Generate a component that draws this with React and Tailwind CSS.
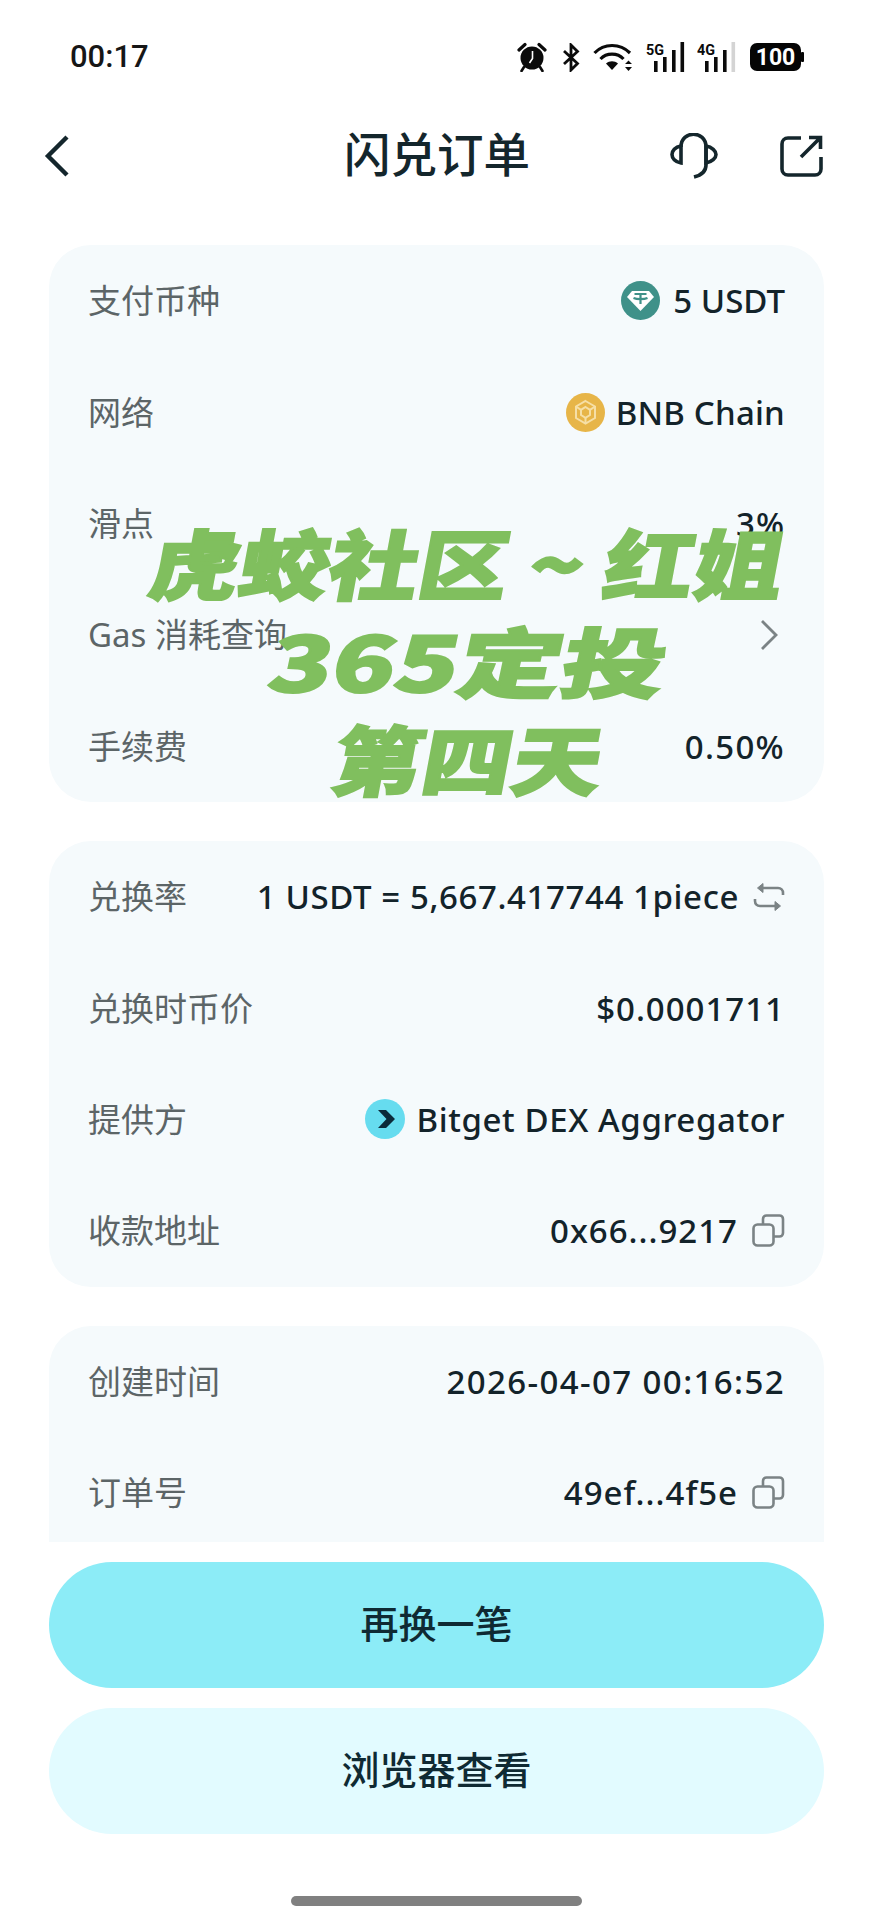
import React from "react";

const sans = "font-['Noto_Sans','Noto_Sans_CJK_SC',sans-serif]";

function Alarm() {
  return (
    <svg width="30" height="30" viewBox="0 0 30 30">
      <circle cx="15" cy="16" r="11.5" fill="#0b0b0b" />
      <path d="M2 8 L8 2.5 M28 8 L22 2.5" stroke="#0b0b0b" strokeWidth="3.2" strokeLinecap="round" />
      <path d="M7 25 L4.5 29 M23 25 L25.5 29" stroke="#0b0b0b" strokeWidth="2.6" strokeLinecap="round" />
      <path d="M15.5 9 V16.5 L12.5 21" stroke="#fff" strokeWidth="1.6" fill="none" />
    </svg>
  );
}

function Bluetooth() {
  return (
    <svg width="18" height="29" viewBox="0 0 18 29">
      <path d="M2 8 L15.5 20.5 L9 27 V2 L15.5 8.5 L2 21" fill="none" stroke="#0b0b0b" strokeWidth="2.8" />
    </svg>
  );
}

function Wifi() {
  return (
    <svg width="40" height="29" viewBox="0 0 40 29">
      <g fill="none" stroke="#0b0b0b" strokeWidth="3.2">
        <path d="M1.5 10 C11 0 27 0 37 10" />
        <path d="M7.5 16 C13.5 9.5 24.5 9.5 30.5 16" />
      </g>
      <path d="M13 20.5 C16.5 17.5 21.5 17.5 25 20.5 L19 27 Z" fill="#0b0b0b" />
      <path d="M32 21 L35.5 17.5 L39 21 Z M32 24 L39 24 L35.5 28 Z" fill="#0b0b0b" />
    </svg>
  );
}

function Signal({ label, dim }) {
  return (
    <svg width="39" height="30" viewBox="0 0 39 30">
      <text x="0" y="13" fontFamily="Roboto, sans-serif" fontWeight="700" fontSize="14.5" fill="#0b0b0b" textLength="18" lengthAdjust="spacingAndGlyphs">{label}</text>
      <rect x="8" y="19" width="3.6" height="11" fill="#0b0b0b" />
      <rect x="17" y="15" width="3.6" height="15" fill="#0b0b0b" />
      <rect x="26" y="8" width="3.6" height="22" fill="#0b0b0b" />
      <rect x="34.5" y="0" width="3.6" height="30" fill={dim ? "#d4d4d4" : "#0b0b0b"} />
    </svg>
  );
}

function Battery() {
  return (
    <svg width="54" height="28" viewBox="0 0 54 28">
      <rect x="0" y="0" width="51" height="28" rx="7" fill="#050505" />
      <rect x="51" y="9" width="3" height="10" rx="1" fill="#050505" />
      <text x="25.5" y="22" textAnchor="middle" fontFamily="Roboto, sans-serif" fontWeight="700" fontSize="23" fill="#fff">100</text>
    </svg>
  );
}

function Usdt() {
  return (
    <svg width="39" height="39" viewBox="0 0 39 39">
      <circle cx="19.5" cy="19.5" r="19.5" fill="#3f9189" />
      <path d="M11 10 H28 L33 16 L19.5 30 L6 16 Z" fill="#fff" />
      <path d="M13.5 13 H25.5 M19.5 13 V23 M12.5 17 C16 18.6 23 18.6 26.5 17" stroke="#3f9189" strokeWidth="2.2" fill="none" />
    </svg>
  );
}

function Bnb() {
  return (
    <svg width="39" height="39" viewBox="0 0 39 39">
      <circle cx="19.5" cy="19.5" r="19.5" fill="#e7b548" />
      <g fill="none" stroke="#f6dfa6" strokeWidth="2">
        <path d="M19.5 8 L29 13.5 V25 L19.5 30.5 L10 25 V13.5 Z" />
        <path d="M19.5 14 L24 16.8 V22 L19.5 24.8 L15 22 V16.8 Z" />
        <path d="M10 13.5 L15 16.8 M29 13.5 L24 16.8 M19.5 30.5 V24.8" />
      </g>
    </svg>
  );
}

function Bitget() {
  return (
    <svg width="40" height="40" viewBox="0 0 40 40">
      <circle cx="20" cy="20" r="20" fill="#66dcef" />
      <path d="M13 11 H21 L30 20 L21 29 H13 L21.5 20 Z" fill="#0b2a3a" />
    </svg>
  );
}

function Swap() {
  return (
    <svg width="32" height="30" viewBox="0 0 32 30" fill="none" stroke="#7b8385" strokeWidth="2.6">
      <path d="M10 6 H25 C28 6 30 8 30 11 V13" />
      <path d="M22 24 H7 C4 24 2 22 2 19 V17" />
      <path d="M10 1.5 L4.5 6 L10 10.5 Z" fill="#7b8385" strokeWidth="1" />
      <path d="M22 19.5 L27.5 24 L22 28.5 Z" fill="#7b8385" strokeWidth="1" />
    </svg>
  );
}

function Copy() {
  return (
    <svg width="33" height="33" viewBox="0 0 33 33" fill="none" stroke="#7b8385" strokeWidth="2.6">
      <rect x="1.5" y="10.5" width="20" height="21" rx="4" />
      <path d="M11 10 V5 C11 3 12.5 1.5 14.5 1.5 H27.5 C29.5 1.5 31 3 31 5 V19 C31 21 29.5 22.5 27.5 22.5 H22" />
    </svg>
  );
}

function Row({ label, children }) {
  return (
    <div className="flex h-[111.4px] items-center justify-between">
      <span className="text-[33px] leading-none text-[#5c6567]">{label}</span>
      <div className="flex items-center text-[33px] leading-none font-medium text-[#13232a]">{children}</div>
    </div>
  );
}

function Card({ children, extra }) {
  return <section className={`rounded-[42px] bg-[#f5fafc] px-[39px] ${extra || ""}`}>{children}</section>;
}

export default function App() {
  return (
    <div className={`relative flex h-[1920px] w-[872px] flex-col overflow-hidden bg-white ${sans}`}>
      <div className="flex h-[114px] shrink-0 items-center justify-between pr-[68px] pl-[70px]">
        <span className="font-['Roboto',sans-serif] text-[31px] font-medium text-[#161616]">00:17</span>
        <div className="flex items-center">
          <Alarm />
          <div className="ml-[15px]"><Bluetooth /></div>
          <div className="ml-[13px]"><Wifi /></div>
          <div className="ml-[13px]"><Signal label="5G" /></div>
          <div className="ml-[12px]"><Signal label="4G" dim /></div>
          <div className="ml-[14px]"><Battery /></div>
        </div>
      </div>

      <header className="relative flex h-[84px] shrink-0 items-center justify-between pr-[49px] pl-[44px]">
        <svg width="26" height="42" viewBox="0 0 26 42" fill="none" stroke="#14262c" strokeWidth="4.4">
          <path d="M23 2 L4 21 L23 40" />
        </svg>
        <h1 className="absolute top-[-1px] left-[1px] flex h-full w-full items-center justify-center text-[46.5px] font-medium text-[#14262c]">闪兑订单</h1>
        <div className="flex items-center gap-[62px]">
          <svg width="48" height="46" viewBox="0 0 48 46" fill="none" stroke="#14262c" strokeWidth="3.6">
            <path d="M11 14 C11 -3 36 -3 36 14 V32 C36 38 32 42 24 44" />
            <path d="M11 13 C5 14 2 18 2 21.5 C2 25 5 29 11 30 Z" />
            <path d="M36 13 C42 14 46 18 46 21.5 C46 25 42 29 36 30 Z" />
          </svg>
          <svg width="43" height="42" viewBox="0 0 43 42" fill="none" stroke="#14262c" strokeWidth="3.6">
            <path d="M21 3 H8 C4.5 3 2 5.5 2 9 V34 C2 37.5 4.5 40 8 40 H35 C38.5 40 41 37.5 41 34 V22" />
            <path d="M21 22 L40 3 M29 2.5 H40.5 V14" />
          </svg>
        </div>
      </header>

      <main className="flex min-h-0 flex-1 flex-col gap-[39px] overflow-hidden pt-[47px] pr-[48px] pl-[49px]">
        <Card>
          <Row label="支付币种"><Usdt /><span className="ml-[13px]">5 USDT</span></Row>
          <Row label="网络"><Bnb /><span className="ml-[11px] tracking-[0.2px]">BNB Chain</span></Row>
          <Row label="滑点"><span className="tracking-[1px]">3%</span></Row>
          <Row label="Gas 消耗查询">
            <svg className="mr-[6px]" width="20" height="32" viewBox="0 0 20 32" fill="none" stroke="#7b8385" strokeWidth="2.8">
              <path d="M3 2 L17 16 L3 30" />
            </svg>
          </Row>
          <Row label="手续费"><span className="tracking-[1.3px]">0.50%</span></Row>
        </Card>
        <Card>
          <Row label="兑换率"><span className="tracking-[0.6px]">1 USDT = 5,667.417744 1piece</span><span className="ml-[14px]"><Swap /></span></Row>
          <Row label="兑换时币价"><span className="tracking-[1px]">$0.0001711</span></Row>
          <Row label="提供方"><Bitget /><span className="ml-[12px] tracking-[0.6px]">Bitget DEX Aggregator</span></Row>
          <Row label="收款地址"><span className="tracking-[1px]">0x66...9217</span><span className="ml-[14px]"><Copy /></span></Row>
        </Card>
        <Card extra="pb-[80px]">
          <Row label="创建时间"><span className="tracking-[1.4px]">2026-04-07 00:16:52</span></Row>
          <Row label="订单号"><span className="tracking-[1px]">49ef...4f5e</span><span className="ml-[14px]"><Copy /></span></Row>
        </Card>
      </main>

      <footer className="flex shrink-0 flex-col pt-[20px] pr-[48px] pb-[14px] pl-[49px]">
        <button className="h-[126px] rounded-full bg-[#8cecf7] pb-[3px] text-[38px] font-medium text-[#0f2a33]">再换一笔</button>
        <button className="mt-[20px] h-[126px] rounded-full bg-[#e2fbff] pb-[3px] text-[38px] font-medium text-[#0f2a33]">浏览器查看</button>
        <div className="mx-auto mt-[62px] h-[10px] w-[291px] rounded-full bg-[#808080]" />
      </footer>

      <div className="absolute top-[512px] left-[119px] flex w-[700px] flex-col items-center font-['Noto_Sans_CJK_SC',sans-serif] text-[76px] leading-[98px] font-black whitespace-pre text-[#80bf5e] [-webkit-text-stroke:2px_#80bf5e]">
        <span className="[transform:scaleX(1.18)_skewX(-9deg)]">虎蛟社区 ~ 红姐</span>
        <span className="[transform:scaleX(1.36)_skewX(-9deg)]">365定投</span>
        <span className="[transform:scaleX(1.18)_skewX(-9deg)]">第四天</span>
      </div>
    </div>
  );
}
